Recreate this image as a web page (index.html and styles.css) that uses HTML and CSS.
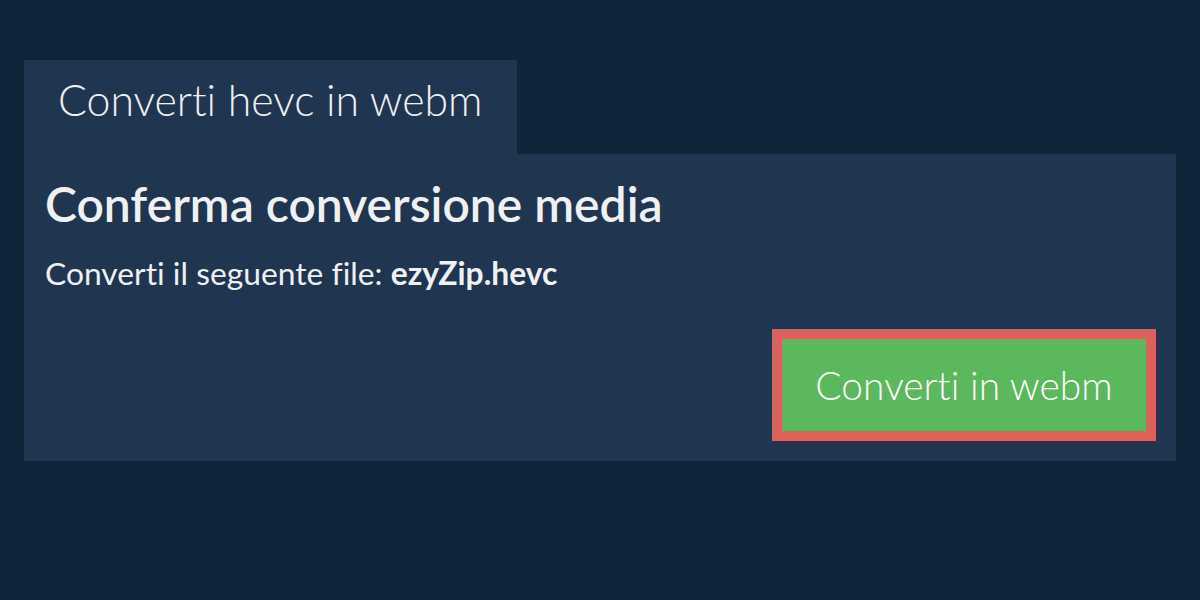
FILE: index.html
```html
<!DOCTYPE html>
<html lang="it">
<head>
<meta charset="utf-8">
<title>Converti hevc in webm</title>
<link rel="stylesheet" href="styles.css">
</head>
<body>
<div class="wrap">
  <div class="tab">Converti hevc in webm</div>
  <div class="panel">
    <h1 class="title">Conferma conversione media</h1>
    <p class="desc">Converti il seguente file: <strong>ezyZip.hevc</strong></p>
    <div class="actions">
      <button class="btn">Converti in webm</button>
    </div>
  </div>
</div>
</body>
</html>
```

FILE: styles.css
```css
html, body {
  margin: 0;
  padding: 0;
}
body {
  background: #0f2339;
  font-family: Lato, "Open Sans", sans-serif;
  font-variant-ligatures: none;
  font-feature-settings: "liga" 0, "clig" 0;
  color: #eef0f2;
  width: 1200px;
  height: 600px;
  overflow: hidden;
}
.wrap {
  padding: 60px 24px 0 24px;
}
.tab {
  display: inline-block;
  background: #20354f;
  height: 94px;
  box-sizing: border-box;
  padding: 13px 34px 0 34px;
  font-weight: 300;
  font-size: 42.8px;
  line-height: 54px;
}
.panel {
  background: #20354f;
  height: 307px;
  box-sizing: border-box;
  padding: 19px 20px 20px 21px;
  display: flex;
  flex-direction: column;
}
.title {
  margin: 0;
  font-size: 48px;
  font-weight: 600;
  line-height: 62px;
}
.desc {
  margin: 20px 0 0 0;
  font-size: 31.8px;
  line-height: 36px;
}
.desc strong {
  font-weight: 700;
}
.actions {
  margin-top: auto;
  display: flex;
  justify-content: flex-end;
}
.btn {
  width: 384px;
  height: 112px;
  box-sizing: border-box;
  background: #5cb85c;
  border: 10px solid #dc605c;
  color: #ffffff;
  font-family: Lato, "Open Sans", sans-serif;
  font-variant-ligatures: none;
  font-feature-settings: "liga" 0, "clig" 0;
  font-weight: 300;
  font-size: 39px;
  padding: 0;
  cursor: pointer;
}
```
